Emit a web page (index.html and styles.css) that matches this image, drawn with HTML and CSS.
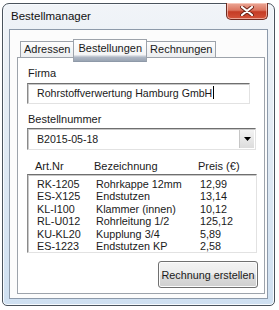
FILE: index.html
```html
<!DOCTYPE html>
<html lang="de">
<head>
  <meta charset="UTF-8">
  <title>Bestellmanager</title>
  <link rel="stylesheet" href="styles.css">
</head>
<body>
  <div class="window">
    <div class="titlebar">
      <span class="title">Bestellmanager</span>
      <button class="close" type="button">
        <svg width="14" height="10" viewBox="0 0 14 10">
          <path d="M2 1 L12 9 M12 1 L2 9" stroke="#6b2418" stroke-width="4" stroke-linecap="round"/>
          <path d="M2 1 L12 9 M12 1 L2 9" stroke="#fff" stroke-width="2.2" stroke-linecap="round"/>
        </svg>
      </button>
    </div>
    <div class="client">
      <div class="tabs">
        <div class="tab">Adressen</div>
        <div class="tab active">Bestellungen</div>
        <div class="tab">Rechnungen</div>
      </div>
      <div class="page">
        <label class="field-label">Firma</label>
        <div class="textbox">Rohrstoffverwertung Hamburg GmbH<span class="caret"></span></div>

        <label class="field-label second">Bestellnummer</label>
        <div class="combo">
          <span class="combo-value">B2015-05-18</span>
          <span class="combo-btn">
            <svg width="7" height="4" viewBox="0 0 7 4"><path d="M0 0 H7 L3.5 4 Z" fill="#000"/></svg>
          </span>
        </div>

        <div class="list-head">
          <span>Art.Nr</span>
          <span>Bezeichnung</span>
          <span>Preis (€)</span>
        </div>
        <div class="listbox">
          <span>RK-1205</span><span>Rohrkappe 12mm</span><span>12,99</span>
          <span>ES-X125</span><span>Endstutzen</span><span>13,14</span>
          <span>KL-I100</span><span>Klammer (innen)</span><span>10,12</span>
          <span>RL-U012</span><span>Rohrleitung 1/2</span><span>125,12</span>
          <span>KU-KL20</span><span>Kupplung 3/4</span><span>5,89</span>
          <span>ES-1223</span><span>Endstutzen KP</span><span>2,58</span>
        </div>

        <div class="actions">
          <button class="btn" type="button">Rechnung erstellen</button>
        </div>
      </div>
    </div>
  </div>
</body>
</html>
```

FILE: styles.css
```css
body {
  margin: 0;
  padding: 3px 0 0 2px;
  background: #ffffff;
  font-family: 'Liberation Sans', Arial, sans-serif;
  font-size: 10.5px;
  color: #1a1a1a;
}
.window {
  box-sizing: border-box;
  width: 273px;
  height: 303px;
  border: 1px solid #4a535c;
  border-radius: 7px 7px 5px 5px;
  background: linear-gradient(180deg, #f1f4f8 0%, #e6edf4 30%, #cfe0f1 100%);
  padding: 0 6px 6px 6px;
  display: flex;
  flex-direction: column;
  box-shadow: inset 0 0 0 1px #f7fbff;
}
.titlebar {
  height: 25px;
  display: flex;
  align-items: flex-start;
  justify-content: space-between;
}
.title {
  margin-top: 6px;
  margin-left: 2px;
  font-size: 11.5px;
  color: #111;
}
.close {
  width: 42px;
  height: 17px;
  margin-top: -1px;
  padding: 0;
  border: 1px solid #6e2a20;
  border-top: none;
  border-radius: 0 0 5px 5px;
  background: linear-gradient(180deg, #eba796 0%, #dc7560 45%, #c53c25 55%, #d4533a 100%);
  box-shadow: inset 0 0 0 1px rgba(255, 220, 210, 0.6);
  display: flex;
  align-items: center;
  justify-content: center;
}
.client {
  flex: 1;
  background: #fcfcfc;
  border: 1px solid #8d9aaa;
  padding: 9px 2px 4px 7px;
}
.tabs {
  display: flex;
  padding-left: 4px;
  height: 18px;
  align-items: flex-end;
  position: relative;
  z-index: 1;
}
.tab {
  box-sizing: border-box;
  height: 16px;
  padding: 0 3px;
  line-height: 15px;
  border: 1px solid #9da3ab;
  border-bottom: none;
  background: linear-gradient(180deg, #fdfdfd 0%, #eceef0 100%);
  margin-left: -1px;
  font-size: 11px;
}
.tab.active {
  height: 23px;
  margin-bottom: -5px;
  padding: 0 4px;
  line-height: 17px;
  background: linear-gradient(180deg, #ffffff 0%, #f4f5f6 70%, #aeb7c4 82%, #9aa5b3 100%);
  border-bottom: 1px solid #8e99a8;
  z-index: 2;
}
.page {
  border: 1px solid #9da3ab;
  background: #ffffff;
  padding: 0 0 5px 0;
  display: flex;
  flex-direction: column;
}
.field-label {
  margin: 8px 0 0 10px;
  line-height: 15px;
  font-size: 11px;
}
.field-label.second {
  margin-top: 8px;
}
.textbox,
.combo {
  box-sizing: border-box;
  margin: 2px 0 0 9px;
  width: 223px;
  height: 21px;
  border: 1px solid;
  border-color: #6f6f6f #e2e2e2 #e2e2e2 #8a8a8a;
  box-shadow: inset 1px 1px 0 #c8c8c8;
  background: #fff;
  padding: 0 0 0 9px;
  line-height: 19px;
  font-size: 10.6px;
}
.caret {
  display: inline-block;
  width: 1px;
  height: 13px;
  background: #000;
  vertical-align: -2px;
  margin-left: 1px;
}
.combo {
  margin-top: 1px;
  width: 229px;
  height: 22px;
  display: flex;
  justify-content: space-between;
  padding-right: 1px;
}
.combo-value {
  line-height: 20px;
}
.combo-btn {
  width: 14px;
  height: 18px;
  margin-top: 1px;
  background: linear-gradient(180deg, #f4f4f4, #dcdcdc);
  border-left: 1px solid #c6c6c6;
  display: flex;
  align-items: center;
  justify-content: center;
}
.list-head,
.listbox {
  display: grid;
  grid-template-columns: 59px 104px 1fr;
  margin-left: 9px;
  padding-left: 9px;
}
.list-head {
  margin-top: 9px;
  line-height: 15px;
  padding-left: 8px;
  font-size: 11px;
}
.listbox {
  box-sizing: border-box;
  width: 230px;
  height: 79px;
  border: 1px solid;
  border-color: #6f6f6f #e2e2e2 #e2e2e2 #8a8a8a;
  box-shadow: inset 1px 1px 0 #c8c8c8;
  background: #fff;
  padding-top: 3px;
  line-height: 12.4px;
  font-size: 10.8px;
  align-content: start;
}
.actions {
  display: flex;
  justify-content: flex-end;
  margin-top: 8px;
  padding-right: 6px;
}
.btn {
  width: 100px;
  height: 27px;
  font-family: inherit;
  font-size: 10.8px;
  color: #1a1a1a;
  border: 1px solid #707070;
  border-radius: 3px;
  background: linear-gradient(180deg, #f3f3f3 0%, #ebebeb 50%, #dddddd 51%, #cfcfcf 100%);
  box-shadow: inset 0 0 0 1px #fcfcfc;
  padding: 0;
}
```
